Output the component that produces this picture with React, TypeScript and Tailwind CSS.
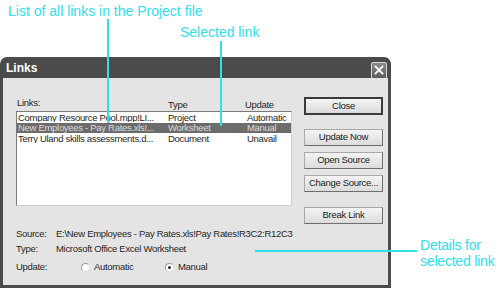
const links = [
  { name: "Company Resource Pool.mpp!LI...", type: "Project", update: "Automatic" },
  { name: "New Employees - Pay Rates.xls!...", type: "Worksheet", update: "Manual", selected: true },
  { name: "Terry Uland skills assessments.d...", type: "Document", update: "Unavail" },
];

function DlgButton({ label, primary = false, className = "" }: { label: string; primary?: boolean; className?: string }) {
  return (
    <div
      className={`h-[17px] w-[79px] flex items-center justify-center whitespace-nowrap bg-gradient-to-b from-[#f4f4f4] to-[#dcdcdc] text-[#222] ${
        primary ? "border-2 border-[#3a3a3a]" : "border border-[#a8a8a8] border-r-[#6e6e6e] border-b-[#6e6e6e]"
      } ${className}`}
    >
      {label}
    </div>
  );
}

function Radio({ label, checked = false }: { label: string; checked?: boolean }) {
  return (
    <div className="flex items-center gap-[4px]">
      <div className="w-[9px] h-[9px] rounded-full bg-white border border-[#9a9a9a] border-r-[#e0e0e0] border-b-[#e0e0e0] flex items-center justify-center">
        {checked && <div className="w-[3px] h-[3px] rounded-full bg-[#222]" />}
      </div>
      <span>{label}</span>
    </div>
  );
}

export default function App() {
  return (
    <div className="relative w-[500px] h-[290px] bg-white overflow-hidden font-['Liberation_Sans',Arial,sans-serif]">
      {/* Dialog */}
      <div className="pt-[57px]">
        <div className="w-[391px] h-[231px] bg-[#4b4b4b] rounded-t-[7px] px-[3px] pb-[3px] flex flex-col">
          {/* Title bar */}
          <div className="h-[21px] shrink-0 flex items-center justify-between pl-[3px] pr-[1px]">
            <span className="text-white font-bold text-[12px] mt-[1px]">Links</span>
            <div className="w-[16px] h-[17px] mt-[5px] rounded-[2px] border border-[#d8d8d8] bg-gradient-to-b from-[#8a8a8a] to-[#5c5c5c] flex items-center justify-center">
              <svg width="10" height="10" viewBox="0 0 10 10">
                <path d="M1.5 1.5 L8.5 8.5 M8.5 1.5 L1.5 8.5" stroke="white" strokeWidth="1.8" strokeLinecap="square" />
              </svg>
            </div>
          </div>

          {/* Body */}
          <div className="flex-1 bg-[#e4e4e4] pt-[18px] pl-[13px] text-[9.5px] text-[#262626] tracking-[-0.3px]">
            <div className="flex gap-[12px]">
              {/* Left: list */}
              <div className="w-[276px]">
                <div className="h-[15px] flex items-start">
                  <span className="w-[152px] pl-[1px]">Links:</span>
                  <span className="w-[77px] mt-[2px]">Type</span>
                  <span className="mt-[2px]">Update</span>
                </div>
                <div className="h-[95px] bg-white border border-[#7a7a7a] border-r-[#d0d0d0] border-b-[#d0d0d0]">
                  {links.map((l) => (
                    <div
                      key={l.name}
                      className={`h-[10.7px] flex items-center leading-none ${l.selected ? "bg-[#6c6c6c] text-[#dcdcdc]" : ""}`}
                    >
                      <span className="w-[151px] pl-[1px] whitespace-nowrap overflow-hidden">{l.name}</span>
                      <span className="w-[79px]">{l.type}</span>
                      <span>{l.update}</span>
                    </div>
                  ))}
                </div>
              </div>

              {/* Right: buttons */}
              <div className="flex flex-col">
                <DlgButton label="Close" primary className="h-[18px] mt-[1px]" />
                <DlgButton label="Update Now" className="mt-[14px]" />
                <DlgButton label="Open Source" className="mt-[6px]" />
                <DlgButton label="Change Source..." className="mt-[6px]" />
                <DlgButton label="Break Link" className="mt-[15px]" />
              </div>
            </div>

            {/* Details */}
            <div className="mt-[4px] flex flex-col">
              <div className="h-[12px] flex items-center">
                <span className="w-[40px]">Source:</span>
                <span>E:\New Employees - Pay Rates.xls!Pay Rates!R3C2:R12C3</span>
              </div>
              <div className="h-[12px] mt-[3px] flex items-center">
                <span className="w-[40px]">Type:</span>
                <span>Microsoft Office Excel Worksheet</span>
              </div>
              <div className="h-[14px] mt-[5px] flex items-center">
                <span className="w-[65px]">Update:</span>
                <div className="w-[84px]">
                  <Radio label="Automatic" />
                </div>
                <Radio label="Manual" checked />
              </div>
            </div>
          </div>
        </div>
      </div>

      {/* Callouts */}
      <div className="absolute left-[8px] top-[4px] text-[14px] text-[#2fe0ea] leading-none whitespace-nowrap">
        List of all links in the Project file
      </div>
      <div className="absolute left-[107px] top-[19px] w-[2px] h-[104px] bg-[#2fe0ea]" />

      <div className="absolute left-[180px] top-[25px] text-[14px] text-[#2fe0ea] leading-none whitespace-nowrap">
        Selected link
      </div>
      <div className="absolute left-[220px] top-[41px] w-[2px] h-[85px] bg-[#2fe0ea]" />

      <div className="absolute left-[255px] top-[250px] w-[162px] h-[2px] bg-[#2fe0ea]" />
      <div className="absolute left-[420px] top-[237px] text-[14px] text-[#2fe0ea] leading-[16px] tracking-[-0.2px] whitespace-nowrap">
        <div>Details for</div>
        <div>selected link</div>
      </div>
    </div>
  );
}
